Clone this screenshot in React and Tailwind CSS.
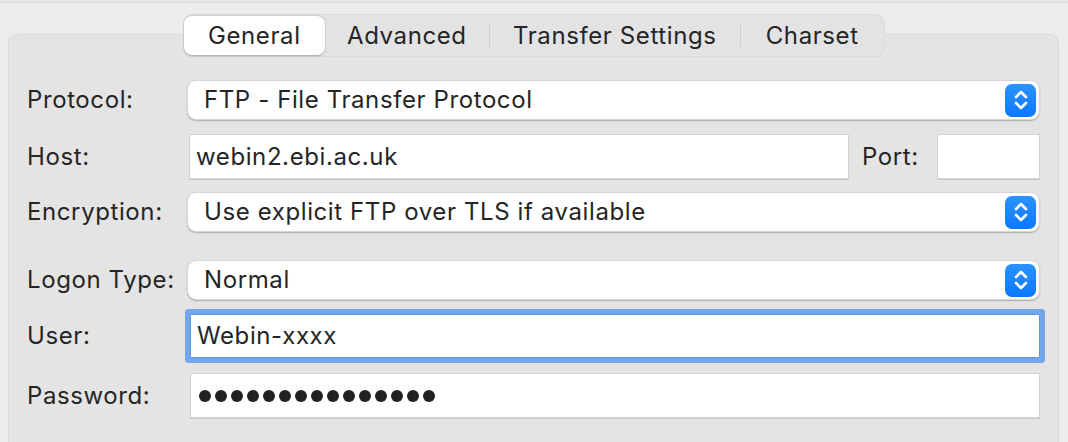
import React from "react";

function Stepper() {
  return (
    <div className="flex h-[33px] w-[31px] items-center justify-center rounded-[7px] bg-gradient-to-b from-[#2a93ff] to-[#0a78ff]">
      <svg width="16" height="24" viewBox="0 0 16 24" fill="none" stroke="white" strokeWidth="2.6" strokeLinecap="round" strokeLinejoin="round">
        <path d="M3 9 L8 4 L13 9" />
        <path d="M3 15 L8 20 L13 15" />
      </svg>
    </div>
  );
}

function Select({ value }) {
  return (
    <div className="flex h-[40px] flex-1 items-center justify-between rounded-[9px] border border-[#d6d6d6] bg-white pl-[16px] pr-[3px] shadow-[0_1px_1.5px_rgba(0,0,0,0.25)]">
      <span>{value}</span>
      <Stepper />
    </div>
  );
}

function Label({ children, w = "w-[160px]" }) {
  return <div className={`${w} shrink-0`}>{children}</div>;
}

export default function App() {
  const tabs = [
    { name: "General", w: "w-[141px]" },
    { name: "Advanced", w: "w-[165px]" },
    { name: "Transfer Settings", w: "w-[252px]" },
    { name: "Charset", w: "w-[144px]" },
  ];
  return (
    <div
      className="h-[442px] w-[1068px] overflow-hidden bg-[#ececec] text-[24px] tracking-[0.6px] text-[#252525]"
      style={{ fontFamily: "Inter, 'Liberation Sans', sans-serif" }}
    >
      <div className="h-[3px] border-b border-[#d6d6d6] bg-[#e6e6e6]" />
      <div className="relative z-10 mx-auto mt-[11px] flex h-[43px] w-[702px] items-center rounded-[10px] border border-[#dadada] bg-[#e3e3e3]">
        {tabs.map((t, i) => (
          <div key={t.name} className={`relative flex h-full ${t.w} items-center justify-center`}>
            {i === 0 ? (
              <div className="absolute inset-y-[1px] left-0 right-0 rounded-[8px] bg-white shadow-[0_0.5px_2px_rgba(0,0,0,0.28)]" />
            ) : null}
            {i >= 2 ? <div className="absolute left-0 top-[9px] h-[23px] w-px bg-[#cdcdcd]" /> : null}
            <span className="relative">{t.name}</span>
          </div>
        ))}
      </div>
      <div className="ml-[8px] mt-[-23px] h-[460px] w-[1051px] rounded-[9px] border border-[#d9d9d9] bg-[#e4e4e4] px-[18px] pt-[45px]">
        <div className="flex items-center">
          <Label>Protocol:</Label>
          <Select value="FTP - File Transfer Protocol" />
        </div>
        <div className="mt-[14px] flex items-center">
          <Label w="w-[162px]">Host:</Label>
          <div className="flex h-[45px] w-[660px] items-center border border-[#d3d3d3] bg-white pl-[6px] shadow-[0_1px_0_rgba(0,0,0,0.12)]">
            webin2.ebi.ac.uk
          </div>
          <div className="ml-[13px] w-[75px]">Port:</div>
          <div className="h-[45px] flex-1 border border-[#d3d3d3] bg-white shadow-[0_1px_0_rgba(0,0,0,0.12)]" />
        </div>
        <div className="mt-[13px] flex items-center">
          <Label>Encryption:</Label>
          <Select value="Use explicit FTP over TLS if available" />
        </div>
        <div className="mt-[28px] flex items-center">
          <Label>Logon Type:</Label>
          <Select value="Normal" />
        </div>
        <div className="mt-[14px] flex items-center">
          <Label w="w-[163px]">User:</Label>
          <div className="flex h-[44px] flex-1 items-center rounded-[1px] border border-[#5f94de] bg-white pl-[6px] shadow-[0_0_0_5px_#74a6ec]">
            Webin-xxxx
          </div>
        </div>
        <div className="mt-[15px] flex items-center">
          <Label w="w-[163px]">Password:</Label>
          <div className="flex h-[45px] flex-1 items-center gap-[4px] border border-[#d3d3d3] bg-white pl-[8px] shadow-[0_1px_0_rgba(0,0,0,0.12)]">
            {Array.from({ length: 15 }).map((_, i) => (
              <span key={i} className="h-[12px] w-[12px] rounded-full bg-[#222]" />
            ))}
          </div>
        </div>
      </div>
    </div>
  );
}
